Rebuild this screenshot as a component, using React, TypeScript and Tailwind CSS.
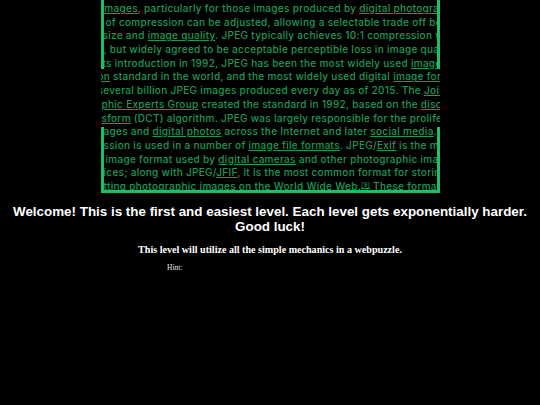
import React from "react"

type Part = string | { link: string } | { sup: string }

// visible window of the wrapped wikipedia paragraph, line by line
const lines: { ml: string; parts: Part[] }[] = [
  { ml: "ml-[1px]", parts: [{ link: "images" }, ", particularly for those images produced by ", { link: "digital photography" }, "."] },
  { ml: "ml-[5px]", parts: ["of compression can be adjusted, allowing a selectable trade off between storage"] },
  { ml: "ml-[2px]", parts: ["size and ", { link: "image quality" }, ". JPEG typically achieves 10:1 compression with little"] },
  { ml: "ml-[-3px]", parts: ["e, but widely agreed to be acceptable perceptible loss in image quality."] },
  { ml: "ml-[2px]", parts: ["ts introduction in 1992, JPEG has been the most widely used ", { link: "image compression" }] },
  { ml: "ml-[-3px]", parts: [{ link: "on" }, " standard in the world, and the most widely used digital ", { link: "image format" }] },
  { ml: "ml-[-3px]", parts: ["several billion JPEG images produced every day as of 2015. The ", { link: "Joint Photographic" }] },
  { ml: "ml-[1px]", parts: [{ link: "phic Experts Group" }, " created the standard in 1992, based on the ", { link: "discrete cosine" }] },
  { ml: "ml-[1px]", parts: [{ link: "sform" }, " (DCT) algorithm. JPEG was largely responsible for the proliferation"] },
  { ml: "ml-[3px]", parts: ["ages and ", { link: "digital photos" }, " across the Internet and later ", { link: "social media" }, "."] },
  { ml: "ml-[3px]", parts: ["ssion is used in a number of ", { link: "image file formats" }, ". JPEG/", { link: "Exif" }, " is the most common"] },
  { ml: "ml-[5px]", parts: ["image format used by ", { link: "digital cameras" }, " and other photographic image capture"] },
  { ml: "ml-[3px]", parts: ["ices; along with JPEG/", { link: "JFIF" }, ", it is the most common format for storing"] },
  { ml: "ml-[3px]", parts: [{ link: "tting photographic images on the World Wide Web." }, { sup: "[9]" }, " These formats"] },
]

function Line({ ml, parts }: { ml: string; parts: Part[] }) {
  return (
    <div className={`h-[13.7px] leading-[13.7px] whitespace-nowrap ${ml}`}>
      {parts.map((p, i) => {
        if (typeof p === "string") return <span key={i}>{p}</span>
        if ("link" in p) return <span key={i} className="underline underline-offset-[1px]">{p.link}</span>
        return (
          <sup key={i} className="text-[6px] underline">
            {p.sup}
          </sup>
        )
      })}
    </div>
  )
}

export default function App() {
  return (
    <div className="min-h-screen w-full bg-black overflow-hidden">
      {/* Puzzle text box */}
      <div
        className="relative mx-auto w-[339px] h-[193px] overflow-hidden pt-[2px] text-[10px] font-medium tracking-[0.3px] text-[#1c9a55]"
        style={{ fontFamily: "Inter, 'Open Sans', sans-serif" }}
      >
        {lines.map((l, i) => (
          <Line key={i} ml={l.ml} parts={l.parts} />
        ))}

        {/* broken border */}
        <div className="absolute left-0 top-0 w-[3px] h-[69px] bg-[#1fbf68]" />
        <div className="absolute left-0 top-[127px] w-[3px] h-[66px] bg-[#1fbf68]" />
        <div className="absolute right-0 top-0 w-[3px] h-[69px] bg-[#1fbf68]" />
        <div className="absolute right-0 top-[127px] w-[3px] h-[66px] bg-[#1fbf68]" />
        <div className="absolute left-0 bottom-0 w-full h-[3px] bg-[#1fbf68]" />
      </div>

      <h2
        className="mt-[11px] text-center text-white font-bold text-[13.4px] leading-[15px]"
        style={{ fontFamily: "'Liberation Sans', Arial, sans-serif" }}
      >
        Welcome! This is the first and easiest level. Each level gets exponentially harder.
        <br />
        Good luck!
      </h2>

      <h3
        className="mt-[9px] text-center text-white font-bold text-[10.1px] leading-[13px]"
        style={{ fontFamily: "'Liberation Serif', 'Times New Roman', serif" }}
      >
        This level will utilize all the simple mechanics in a webpuzzle.
      </h3>

      <p
        className="mt-[7px] pl-[167px] text-[7.5px] leading-[10px] text-[#e5e5e5]"
        style={{ fontFamily: "'Liberation Serif', 'Times New Roman', serif" }}
      >
        Hint:
      </p>
    </div>
  )
}
